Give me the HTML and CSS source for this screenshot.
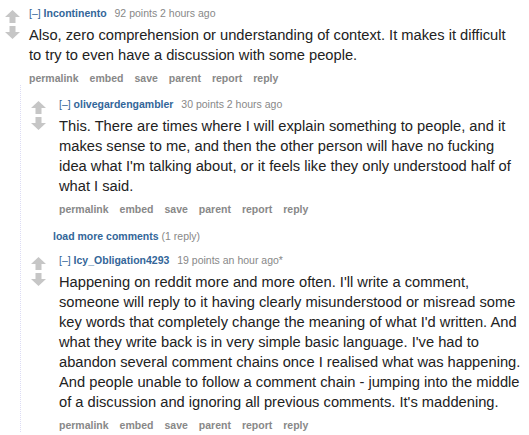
FILE: index.html
```html
<!DOCTYPE html>
<html>
<head>
<meta charset="utf-8">
<link rel="stylesheet" href="styles.css">
</head>
<body>
<div class="comment top">
  <div class="votes">
    <svg class="arrow" viewBox="0 0 15 13" width="15" height="13"><path d="M7.5 0 L15 7 L10.5 7 L10.5 13 L4.5 13 L4.5 7 L0 7 Z"/></svg>
    <svg class="arrow" viewBox="0 0 15 13" width="15" height="13"><path d="M7.5 13 L15 6 L10.5 6 L10.5 0 L4.5 0 L4.5 6 L0 6 Z"/></svg>
  </div>
  <div class="entry">
    <p class="tagline"><span class="expand">[–]</span> <span class="author">Incontinento</span> <span class="score">92 points 2 hours ago</span></p>
    <div class="md">Also, zero comprehension or understanding of context. It makes it difficult to try to even have a discussion with some people.</div>
    <ul class="buttons"><li>permalink</li><li>embed</li><li>save</li><li>parent</li><li>report</li><li>reply</li></ul>
  </div>
</div>
<div class="child">
  <div class="comment">
    <div class="votes">
      <svg class="arrow" viewBox="0 0 15 13" width="15" height="13"><path d="M7.5 0 L15 7 L10.5 7 L10.5 13 L4.5 13 L4.5 7 L0 7 Z"/></svg>
      <svg class="arrow" viewBox="0 0 15 13" width="15" height="13"><path d="M7.5 13 L15 6 L10.5 6 L10.5 0 L4.5 0 L4.5 6 L0 6 Z"/></svg>
    </div>
    <div class="entry">
      <p class="tagline"><span class="expand">[–]</span> <span class="author">olivegardengambler</span> <span class="score">30 points 2 hours ago</span></p>
      <div class="md">This. There are times where I will explain something to people, and it makes sense to me, and then the other person will have no fucking idea what I'm talking about, or it feels like they only understood half of what I said.</div>
      <ul class="buttons"><li>permalink</li><li>embed</li><li>save</li><li>parent</li><li>report</li><li>reply</li></ul>
    </div>
  </div>
  <div class="morechildren"><span class="more">load more comments</span> <span class="gray">(1 reply)</span></div>
  <div class="comment">
    <div class="votes">
      <svg class="arrow" viewBox="0 0 15 13" width="15" height="13"><path d="M7.5 0 L15 7 L10.5 7 L10.5 13 L4.5 13 L4.5 7 L0 7 Z"/></svg>
      <svg class="arrow" viewBox="0 0 15 13" width="15" height="13"><path d="M7.5 13 L15 6 L10.5 6 L10.5 0 L4.5 0 L4.5 6 L0 6 Z"/></svg>
    </div>
    <div class="entry">
      <p class="tagline"><span class="expand">[–]</span> <span class="author">Icy_Obligation4293</span> <span class="score">19 points an hour ago*</span></p>
      <div class="md">Happening on reddit more and more often. I'll write a comment, someone will reply to it having clearly misunderstood or misread some key words that completely change the meaning of what I'd written. And what they write back is in very simple basic language. I've had to abandon several comment chains once I realised what was happening. And people unable to follow a comment chain - jumping into the middle of a discussion and ignoring all previous comments. It's maddening.</div>
      <ul class="buttons"><li>permalink</li><li>embed</li><li>save</li><li>parent</li><li>report</li><li>reply</li></ul>
    </div>
  </div>
</div>
</body>
</html>
```
FILE: styles.css
```css
html, body {
  margin: 0;
  padding: 0;
  background: #fff;
}
body {
  font-family: "Liberation Sans", Arial, sans-serif;
  color: #222;
  width: 529px;
  height: 435px;
  overflow: hidden;
}
.comment {
  display: flex;
  align-items: flex-start;
  padding-top: 6px;
}
.votes {
  flex: none;
  display: flex;
  flex-direction: column;
  align-items: center;
  gap: 3px;
  padding-top: 4px;
  width: 25px;
  margin-right: 4px;
}
.arrow {
  display: block;
  fill: #c6c6c6;
}
.entry {
  flex: 1;
  min-width: 0;
  padding-right: 4px;
}
.top .entry {
  padding-right: 14px;
}
.tagline {
  margin: 0;
  font-size: 10.5px;
  line-height: 14px;
  color: #888;
}
.expand {
  color: #369;
}
.author {
  color: #369;
  font-weight: bold;
}
.score {
  margin-left: 5px;
}
.md {
  font-size: 14.7px;
  line-height: 20px;
  color: #222;
  margin-top: 4.5px;
}
.buttons {
  list-style: none;
  margin: 0;
  padding: 6.5px 0 0;
  display: flex;
  gap: 11px;
  font-size: 10.5px;
  font-weight: bold;
  color: #888;
  line-height: 14px;
}
.child {
  margin-left: 20px;
  padding-top: 6px;
  border-left: 1px dotted #dcdcf4;
}
.child .votes {
  width: 34px;
}
.morechildren {
  padding: 13px 0 0 32px;
  font-size: 10.5px;
  line-height: 14px;
}
.child .comment + .morechildren + .comment {
  padding-top: 10px;
}
.more {
  color: #369;
  font-weight: bold;
}
.gray {
  color: #888;
}
```
